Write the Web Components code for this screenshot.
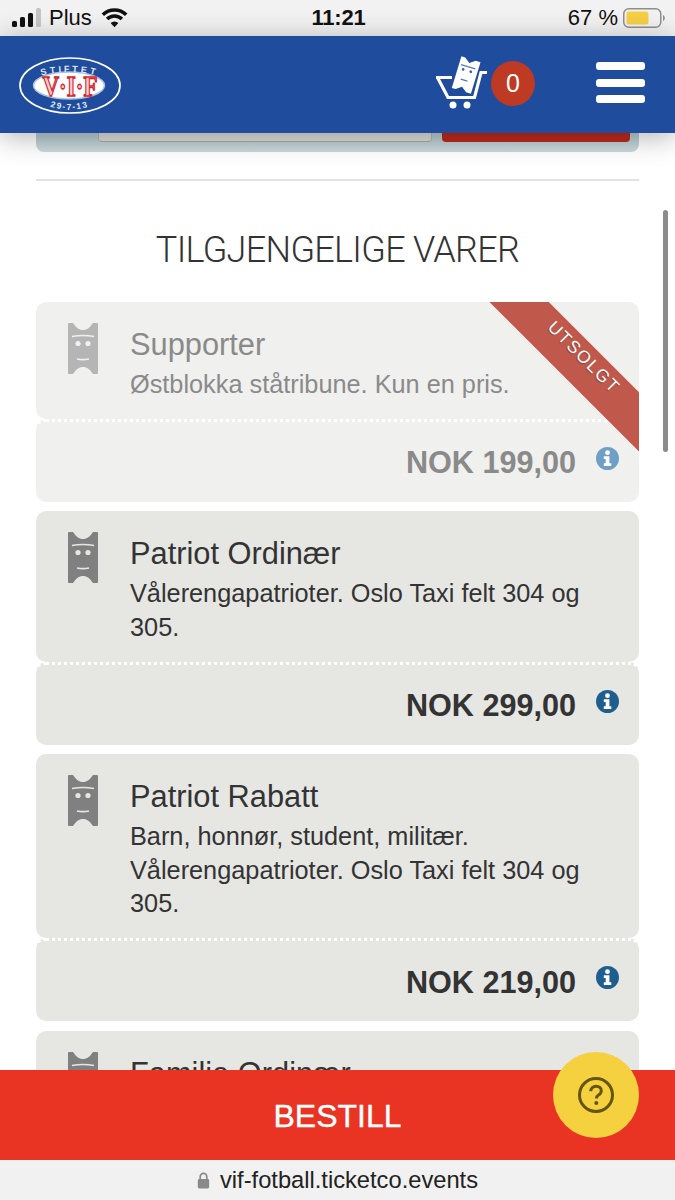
<!DOCTYPE html>
<html lang="no">
<head>
<meta charset="utf-8">
<title>Tilgjengelige varer</title>
<style>
  html, body { margin: 0; padding: 0; background: #fff; font-family: 'Liberation Sans', Arial, sans-serif; }
</style>
</head>
<body>
<vif-app>
  <ios-status-bar></ios-status-bar>
  <site-header></site-header>
  <ticket-list>
    <ticket-card sold price="NOK 199,00">
      <span slot="name">Supporter</span>
      Østblokka ståtribune. Kun en pris.
    </ticket-card>
    <ticket-card price="NOK 299,00">
      <span slot="name">Patriot Ordinær</span>
      Vålerengapatrioter. Oslo Taxi felt 304 og 305.
    </ticket-card>
    <ticket-card price="NOK 219,00">
      <span slot="name">Patriot Rabatt</span>
      Barn, honnør, student, militær. Vålerengapatrioter. Oslo Taxi felt 304 og 305.
    </ticket-card>
    <ticket-card>
      <span slot="name">Familie Ordinær</span>
    </ticket-card>
  </ticket-list>
  <order-bar></order-bar>
  <url-bar></url-bar>
</vif-app>

<script>
const define = (name, html, proto = {}) => {
  const template = document.createElement('template');
  template.innerHTML = html;
  customElements.define(name, class extends HTMLElement {
    connectedCallback() {
      if (this.shadowRoot) return;
      const root = this.attachShadow({ mode: 'open' });
      root.appendChild(template.content.cloneNode(true));
      if (proto.init) proto.init.call(this, root);
    }
  });
};

define('vif-app', `
<style>
  :host { display: flex; flex-direction: column; position: relative; width: 675px; height: 1200px; overflow: hidden; }
</style>
<slot></slot>
`);

define('ios-status-bar', `
<style>
  :host { display: flex; align-items: center; justify-content: space-between; flex: 0 0 36px; height: 36px; padding: 0 10px 0 12px; box-sizing: border-box; background: #f2f2f2; color: #111; font-size: 22px; }
  .side { display: flex; align-items: center; flex: 1 1 0; }
  .right { justify-content: flex-end; }
  .plus { margin-left: 8px; }
  .wifi { margin-left: 9px; }
  .time { font-weight: 700; font-size: 22px; letter-spacing: -.2px; }
  .pct { margin-right: 5px; }
</style>
<div class="side">
  <svg width="29" height="20" viewBox="0 0 29 20">
    <rect x="0" y="13" width="5" height="6" rx="1.5" fill="#111"/>
    <rect x="8" y="9" width="5" height="10" rx="1.5" fill="#111"/>
    <rect x="16" y="5" width="5" height="14" rx="1.5" fill="#111"/>
    <rect x="24" y="0" width="5" height="19" rx="1.5" fill="#c6c6c6"/>
  </svg>
  <span class="plus">Plus</span>
  <svg class="wifi" width="27" height="20" viewBox="0 0 27 20">
    <path d="M1.800 6.800a16.500 16.500 0 0 1 23.400 0" fill="none" stroke="#111" stroke-width="3.500"/>
    <path d="M6.100 11.100a10.500 10.500 0 0 1 14.800 0" fill="none" stroke="#111" stroke-width="3.500"/>
    <path d="M13.500 19.300L9.600 15.100a5.500 5.500 0 0 1 7.800 0z" fill="#111"/>
  </svg>
</div>
<div class="time">11:21</div>
<div class="side right">
  <span class="pct">67 %</span>
  <svg width="42" height="21" viewBox="0 0 42 21">
    <rect x=".75" y=".75" width="37" height="18.500" rx="5" fill="none" stroke="#8e8e8e" stroke-width="1.500"/>
    <rect x="3.500" y="3.500" width="22" height="13" rx="2.500" fill="#f6cf45"/>
    <path d="M40 7c1.200.5 1.800 1.600 1.800 3s-.6 2.500-1.800 3z" fill="#8e8e8e"/>
  </svg>
</div>
`);

define('site-header', `
<style>
  :host { display: flex; align-items: center; flex: 0 0 97px; height: 97px; padding: 0 30px 0 19px; box-sizing: border-box; background: #1f4c9c; position: relative; z-index: 2; box-shadow: 0 4px 26px rgba(0,0,0,.3); }
  .logo { display: block; overflow: visible; }
  .cart { display: flex; align-items: center; margin-left: auto; margin-top: -3px; }
  .cart svg { overflow: visible; }
  .count { display: flex; align-items: center; justify-content: center; width: 44px; height: 45px; margin-left: 3px; border-radius: 50%; background: #bf3a22; color: #fff; font-size: 25px; }
  .menu { display: flex; flex-direction: column; gap: 8.500px; margin-left: 61px; margin-top: -4px; }
  .menu i { display: block; width: 49px; height: 8px; border-radius: 3px; background: #fff; }
</style>
<svg class="logo" width="103" height="58" viewBox="0 0 103 58">
  <defs>
    <path id="arcTop" d="M9.500 29.500A41 13.500 0 0 1 91.500 29.500"/>
    <path id="arcBottom" d="M9.500 29.500A41 24 0 0 0 91.500 29.500"/>
  </defs>
  <ellipse cx="51" cy="29.500" rx="50" ry="27.500" fill="#1f4c9c" stroke="#fff" stroke-width="1.700"/>
  <ellipse cx="50" cy="29.500" rx="35.500" ry="13.500" fill="#fff" stroke="#a9c0e0" stroke-width="1.500"/>
  <text font-family="'Liberation Sans', sans-serif" font-size="9" font-weight="700" fill="#dfe8f5" letter-spacing="2.800"><textPath href="#arcTop" startOffset="50%" text-anchor="middle">STIFTET</textPath></text>
  <text font-family="'Liberation Sans', sans-serif" font-size="8.500" font-weight="700" fill="#dfe8f5" letter-spacing="1.400"><textPath href="#arcBottom" startOffset="50%" text-anchor="middle">29-7-13</textPath></text>
  <text x="23.500" y="40" textLength="55" lengthAdjust="spacingAndGlyphs" font-family="'Liberation Serif', serif" font-size="30" font-weight="700" fill="#f9d0d0" stroke="#d8232a" stroke-width="1.400">V·I·F</text>
</svg>
<div class="cart">
  <svg width="52" height="52" viewBox="0 0 52 52">
    <path d="M0 20.500h16M1.500 20.500L12 40.500h26.500L45 15.500h6" fill="none" stroke="#fff" stroke-width="3.200"/>
    <circle cx="17" cy="48" r="3.500" fill="#fff"/>
    <circle cx="31" cy="48" r="3.500" fill="#fff"/>
    <g transform="translate(0 -1.500) rotate(17 30 20)">
      <path d="M20 3h4l5.500 4 5.500-4h5v33h-5l-5.500-4-5.500 4h-4z" fill="#fff"/>
      <path d="M22 11h15" stroke="#5a78b8" stroke-width="1.200"/>
      <circle cx="25.500" cy="15" r="1.400" fill="#3f5fa8"/>
      <circle cx="33.500" cy="15" r="1.400" fill="#3f5fa8"/>
      <path d="M26 25h7" stroke="#5a78b8" stroke-width="1.200"/>
    </g>
  </svg>
  <div class="count">0</div>
</div>
<div class="menu"><i></i><i></i><i></i></div>
`);

define('ticket-list', `
<style>
  :host { display: block; flex: 1 1 0; min-height: 0; overflow: hidden; position: relative; padding: 0 36px; }
  .search { display: flex; gap: 10px; height: 19px; padding: 0 9px 0 62px; box-sizing: border-box; background: linear-gradient(#b7cbd1, #c9d9dc); border-radius: 0 0 8px 8px; }
  .field { width: 334px; height: 9px; background: #dededb; border-bottom: 1px solid #a9a9a6; border-left: 1px solid #b5b5b2; border-right: 1px solid #b5b5b2; border-radius: 0 0 4px 4px; box-sizing: border-box; }
  .go { flex: 1; height: 9px; background: #bf291d; border-radius: 0 0 4px 4px; }
  hr { height: 2px; margin: 27px 0 0; border: 0; background: #e3e3e3; }
  h2 { margin: 44px 0 0; height: 77px; font: 300 36px/50px Roboto, 'Liberation Sans', sans-serif; color: #333; text-align: center; letter-spacing: -.7px; }
  .items { display: flex; flex-direction: column; gap: 9.600px; }
  .scroll { position: absolute; left: 663px; top: 77px; width: 5px; height: 242px; border-radius: 3px; background: #8c8c8c; }
</style>
<div class="search"><div class="field"></div><div class="go"></div></div>
<hr>
<h2>TILGJENGELIGE VARER</h2>
<div class="items"><slot></slot></div>
<div class="scroll"></div>
`);

define('ticket-icon', `
<style>
  :host { display: block; width: 30px; height: 51px; color: #808080; --face: #e6e6e3; }
</style>
<svg width="30" height="51" viewBox="0 0 30 51">
  <path d="M1 0h4c3 4.500 6 7 10 7s7-2.500 10-7h4a1 1 0 0 1 1 1v49a1 1 0 0 1-1 1h-4c-3-4.500-6-7-10-7s-7 2.500-10 7H1a1 1 0 0 1-1-1V1a1 1 0 0 1 1-1z" fill="currentColor"/>
  <path d="M4 13.500c7-1.300 15-1.300 22 0" fill="none" stroke="var(--face)" stroke-width="1.600"/>
  <circle cx="10" cy="20.500" r="2.600" fill="var(--face)"/>
  <circle cx="20" cy="20.500" r="2.600" fill="var(--face)"/>
  <path d="M9 36c4 .8 8 .8 12 0" fill="none" stroke="var(--face)" stroke-width="1.600"/>
</svg>
`);

define('info-icon', `
<style>
  :host { display: block; width: 23px; height: 23px; color: #1f5f8f; }
</style>
<svg width="23" height="23" viewBox="0 0 23 23">
  <circle cx="11.500" cy="11.500" r="11.500" fill="currentColor"/>
  <circle cx="11.500" cy="5.700" r="2.400" fill="#fff"/>
  <path d="M7.800 9.300h5.600v7h1.900v2.700H7.800v-2.700h1.900v-4.300H7.800z" fill="#fff"/>
</svg>
`);

define('ticket-card', `
<style>
  :host { display: block; position: relative; color: #333; --bg: #e6e6e3; }
  :host([sold]) { color: #8a8a8a; --bg: #f0f0ef; }
  .top { display: flex; background: var(--bg); border-radius: 10px; padding: 21px 30px 17.300px 32px; box-sizing: border-box; min-height: 116.800px; }
  ticket-icon { flex: none; margin-right: 32px; }
  :host([sold]) ticket-icon { color: #b5b5b5; --face: #f0f0ef; }
  .text { padding-top: 1px; min-width: 0; }
  .name { font-size: 30.800px; line-height: 40px; margin-top: 1px; }
  .desc { font-size: 25.300px; line-height: 33.500px; margin-top: 3px; }
  .stub { display: flex; align-items: center; justify-content: flex-end; height: 83px; box-sizing: border-box; background: var(--bg); border-top: 3px dotted #fff; border-radius: 10px; padding: 2px 20px 0 0; }
  .price { font-size: 30.600px; font-weight: 700; }
  info-icon { margin: -9px 0 0 20px; }
  :host([sold]) info-icon { color: #6f9fc4; }
  .ribbon { position: absolute; top: 0; right: 0; width: 150px; height: 150px; overflow: hidden; pointer-events: none; }
  .band { position: absolute; left: -20px; top: 39px; width: 220px; height: 42.400px; padding-bottom: 13px; box-sizing: border-box; background: #c0594b; color: #fff; font-size: 17.500px; line-height: 29px; letter-spacing: 1.600px; text-align: center; text-shadow: 0 1px 1px rgba(0,0,0,.35); transform: rotate(45deg); }
</style>
<div class="top">
  <ticket-icon></ticket-icon>
  <div class="text">
    <div class="name"><slot name="name"></slot></div>
    <div class="desc"><slot></slot></div>
  </div>
</div>
<div class="stub"><span class="price"></span><info-icon></info-icon></div>
`, {
  init(root) {
    root.querySelector('.price').textContent = this.getAttribute('price') || '';
    if (this.hasAttribute('sold')) {
      const ribbon = document.createElement('div');
      ribbon.className = 'ribbon';
      ribbon.innerHTML = '<div class="band">UTSOLGT</div>';
      root.appendChild(ribbon);
    }
  }
});

define('order-bar', `
<style>
  :host { display: block; flex: 0 0 90px; height: 90px; position: relative; z-index: 3; background: #e93323; }
  .label { display: flex; align-items: center; justify-content: center; height: 90px; padding-top: 2px; box-sizing: border-box; color: #fff; font-size: 32px; font-weight: 500; -webkit-text-stroke: .4px #fff; }
  .help { position: absolute; left: 553px; top: -18px; width: 86px; height: 86px; display: flex; align-items: center; justify-content: center; border-radius: 50%; background: #f6d13f; }
</style>
<div class="label">BESTILL</div>
<div class="help">
  <svg width="38" height="38" viewBox="0 0 38 38">
    <circle cx="19" cy="19" r="16.500" fill="none" stroke="#64560f" stroke-width="3"/>
    <path d="M13.800 15.200c0-3 2.300-5 5.300-5s5.200 1.800 5.200 4.500c0 2.200-1.200 3.300-2.800 4.400-1.500 1-2.100 1.700-2.100 3.400" fill="none" stroke="#64560f" stroke-width="3"/>
    <circle cx="19.300" cy="27" r="2" fill="#64560f"/>
  </svg>
</div>
`);

define('url-bar', `
<style>
  :host { display: flex; align-items: center; justify-content: center; gap: 10px; flex: 0 0 40px; height: 40px; box-sizing: border-box; background: #f1f1f1; color: #222; font-size: 23.700px; }
  svg { flex: none; }
</style>
<svg width="13" height="17" viewBox="0 0 13 18">
  <path d="M3 8V5a3.500 3.500 0 0 1 7 0v3" fill="none" stroke="#8a8a8a" stroke-width="1.800"/>
  <rect x="0.500" y="7.500" width="12" height="10" rx="1.500" fill="#8a8a8a"/>
</svg>
<span>vif-fotball.ticketco.events</span>
`);
</script>
</body>
</html>
